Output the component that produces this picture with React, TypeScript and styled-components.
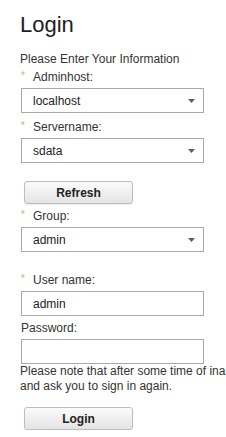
import styled, { createGlobalStyle } from "styled-components";

const GlobalStyle = createGlobalStyle`
  html, body {
    margin: 0;
    padding: 0;
    background: #ffffff;
    overflow: hidden;
  }

  body {
    font-family: "Liberation Sans", Arial, sans-serif;
    font-size: 12px;
    color: #222222;
  }
`;

const Page = styled.div`
  padding: 12px 0 0 20px;
  width: 206px;
`;

const Title = styled.h1`
  margin: 0;
  font-size: 22px;
  font-weight: normal;
  line-height: 26px;
  color: #1e1e1e;
`;

const Intro = styled.p`
  margin: 14px 0 0;
  line-height: 15px;
  color: #333333;
`;

const Field = styled.div<{ $gap: number }>`
  margin-top: ${(p) => p.$gap}px;
`;

const Label = styled.label`
  display: block;
  margin: 0 0 3px 1px;
  line-height: 15px;
  color: #333333;
`;

const Required = styled.span`
  display: inline-block;
  width: 12px;
  color: #eb9f6e;
  font-size: 10px;
  vertical-align: top;
  line-height: 12px;
`;

const SelectBox = styled.div`
  box-sizing: border-box;
  display: flex;
  align-items: center;
  justify-content: space-between;
  width: 183px;
  height: 25px;
  margin-left: 1px;
  padding: 0 8px 0 11px;
  border: 1px solid #a8a8a8;
  background: #ffffff;
  color: #222222;
`;

const Arrow = styled.svg`
  width: 7px;
  height: 4px;
  fill: #5e5e5e;
`;

const TextInput = styled.input`
  box-sizing: border-box;
  display: block;
  width: 183px;
  height: 25px;
  margin: 0 0 0 1px;
  padding: 0 11px;
  border: 1px solid #a8a8a8;
  background: #ffffff;
  font-family: "Liberation Sans", Arial, sans-serif;
  font-size: 12px;
  color: #222222;
  outline: none;
`;

const Button = styled.button<{ $gap: number }>`
  display: block;
  box-sizing: border-box;
  width: 109px;
  height: 23px;
  margin: ${(p) => p.$gap}px 0 0 4px;
  padding: 0;
  border: 1px solid #bdbdbd;
  border-radius: 3px;
  background: linear-gradient(#fbfbfb, #e4e4e4);
  box-shadow: 0 1px 1px rgba(0, 0, 0, 0.08);
  font-family: "Liberation Sans", Arial, sans-serif;
  font-size: 12px;
  font-weight: bold;
  color: #222222;
  cursor: pointer;
`;

const Note = styled.p`
  margin: 0;
  width: 206px;
  line-height: 15px;
  white-space: nowrap;
  overflow: hidden;
  color: #333333;
`;

const Select = ({ value }: { value: string }) => (
  <SelectBox>
    <span>{value}</span>
    <Arrow viewBox="0 0 7 4">
      <polygon points="0,0 7,0 3.5,4" />
    </Arrow>
  </SelectBox>
);

const App = () => {
  return (
    <Page>
      <GlobalStyle />
      <Title>Login</Title>
      <Intro>Please Enter Your Information</Intro>

      <Field $gap={3}>
        <Label>
          <Required>*</Required>Adminhost:
        </Label>
        <Select value="localhost" />
      </Field>

      <Field $gap={7}>
        <Label>
          <Required>*</Required>Servername:
        </Label>
        <Select value="sdata" />
      </Field>

      <Button $gap={18}>Refresh</Button>

      <Field $gap={5}>
        <Label>
          <Required>*</Required>Group:
        </Label>
        <Select value="admin" />
      </Field>

      <Field $gap={21}>
        <Label>
          <Required>*</Required>User name:
        </Label>
        <TextInput type="text" defaultValue="admin" />
      </Field>

      <Field $gap={5}>
        <Label>Password:</Label>
        <TextInput type="password" />
      </Field>

      <Note>
        Please note that after some time of inactivity, the system will sign you out automatically
        <br />
        and ask you to sign in again.
      </Note>

      <Button $gap={13}>Login</Button>
    </Page>
  );
};

export default App;
